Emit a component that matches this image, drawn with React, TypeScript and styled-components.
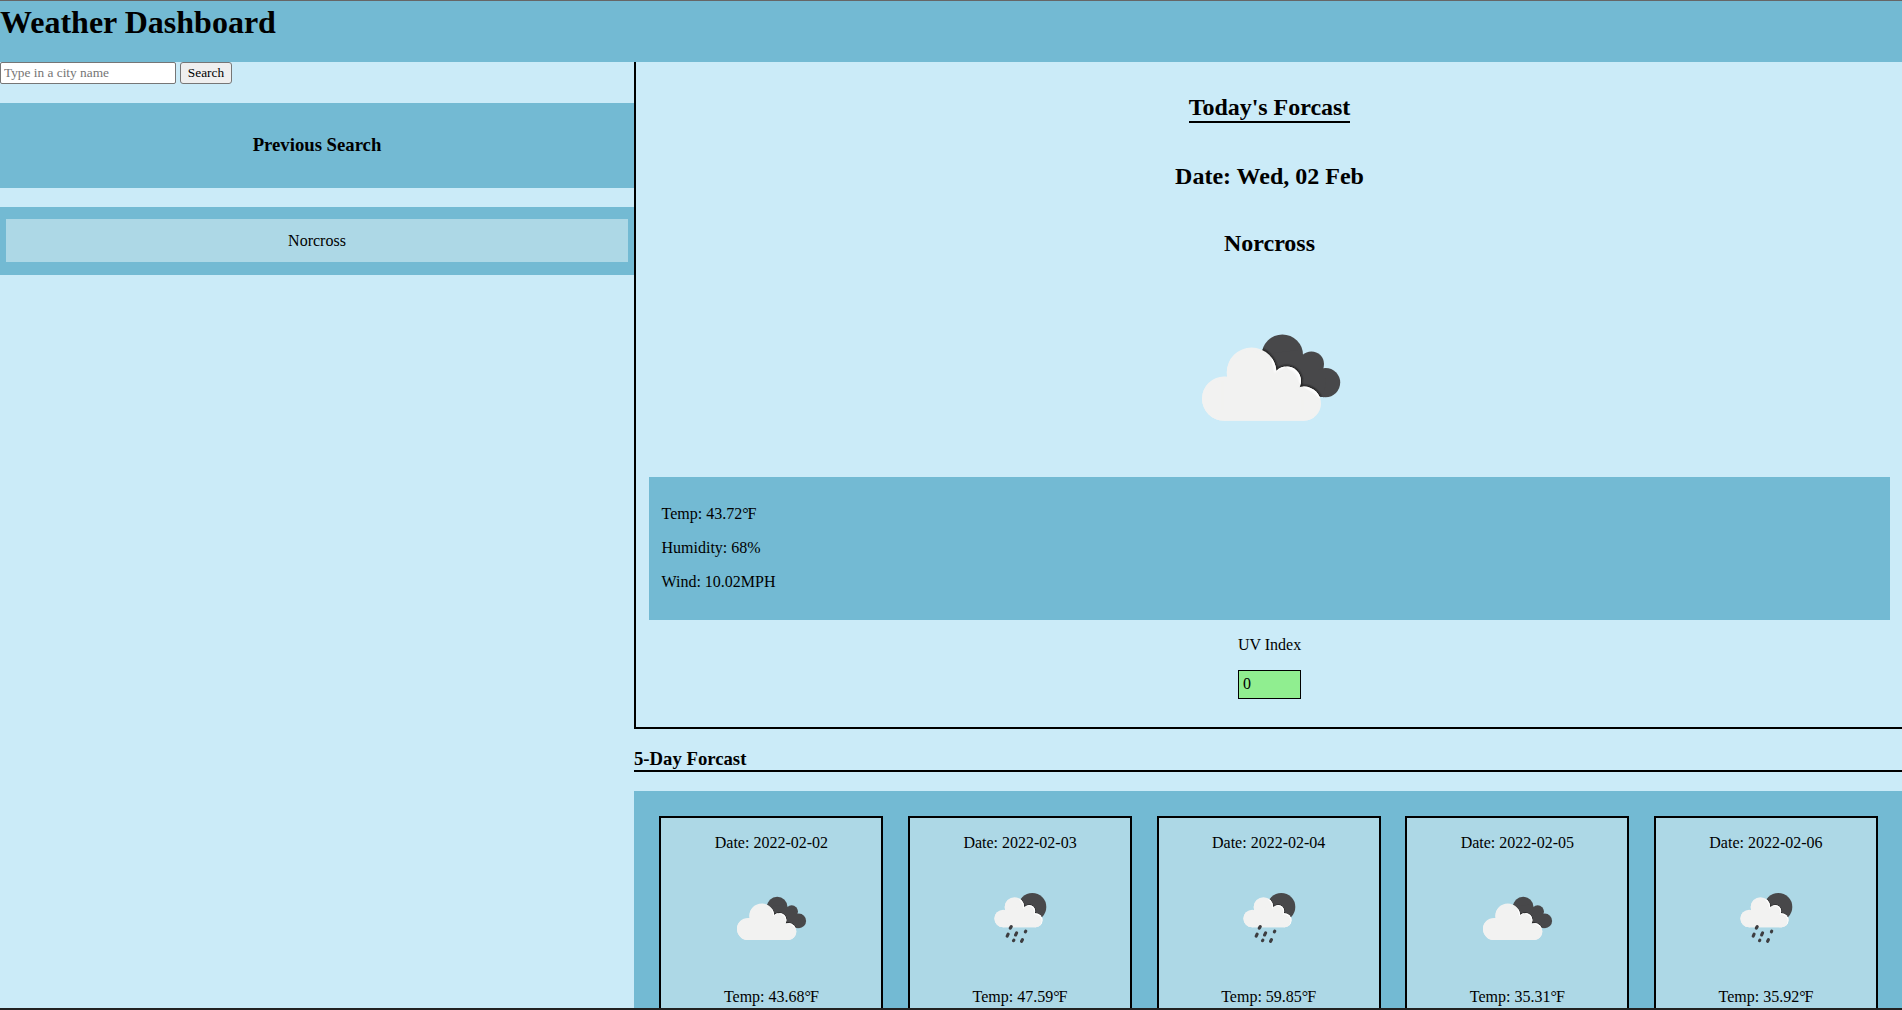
import React from "react";
import styled, { createGlobalStyle } from "styled-components";

const GlobalStyle = createGlobalStyle`
  * { box-sizing: border-box; }
  body {
    margin: 0;
    background: #cbebf8;
    font-family: "Liberation Serif", "Times New Roman", serif;
    font-size: 16px;
    line-height: 18px;
    color: #000;
  }
  h1, h2, h3, p { margin: 0; }
`;

const Page = styled.div`
  height: 1010px;
  overflow: hidden;
  display: flex;
  flex-direction: column;
  border-top: 1px solid #666;
  border-bottom: 2px solid #222;
`;

const Header = styled.header`
  flex: none;
  height: 61px;
  background: #73bad3;
`;

const Title = styled.h1`
  font-size: 32px;
  line-height: 37px;
  padding-top: 3px;
`;

const Main = styled.main`
  flex: 1;
  min-height: 0;
  display: flex;
`;

const Sidebar = styled.aside`
  width: 634px;
  flex: none;
`;

const SearchForm = styled.form`
  display: flex;
  gap: 4px;
  height: 41px;
  align-items: flex-start;
`;

const CityInput = styled.input`
  width: 176px;
  height: 22px;
  padding: 1px 3px 1px 3px;
  border: 1px solid #767676;
  border-radius: 2px;
  background: #fff;
  font-family: inherit;
  font-size: 13.333px;
  &::placeholder { color: #757575; }
`;

const SearchButton = styled.button`
  width: 52px;
  height: 22px;
  padding: 0;
  border: 1px solid #767676;
  border-radius: 3px;
  background: #efefef;
  font-family: inherit;
  font-size: 13.333px;
  color: #000;
`;

const SearchHeading = styled.h3`
  height: 85px;
  line-height: 84px;
  font-size: 18.72px;
  text-align: center;
  background: #73bad3;
`;

const History = styled.div`
  margin-top: 19px;
  height: 68px;
  padding: 12px 6px 13px;
  background: #73bad3;
`;

const HistoryItem = styled.div`
  height: 43px;
  line-height: 44px;
  text-align: center;
  background: #add8e6;
`;

const Content = styled.section`
  flex: 1;
  min-width: 0;
  display: flex;
  flex-direction: column;
`;

const Today = styled.div`
  flex: none;
  height: 667px;
  padding: 32px 12px 0 13px;
  border-left: 2px solid #000;
  border-bottom: 2px solid #000;
  display: flex;
  flex-direction: column;
  align-items: center;
`;

const TodayHeading = styled.h2<{ $underlined?: boolean; $gap: number }>`
  font-size: 24px;
  line-height: 27px;
  margin-bottom: ${(p) => p.$gap}px;
  letter-spacing: ${(p) => (p.$underlined ? "-0.04px" : "normal")};
  border-bottom: ${(p) => (p.$underlined ? "2px solid #000" : "none")};
`;

const Stats = styled.div`
  align-self: stretch;
  height: 143px;
  padding: 28px 12.5px 0;
  display: flex;
  flex-direction: column;
  gap: 16px;
  background: #73bad3;
`;

const Degree = styled.span`
  letter-spacing: -1px;
`;

const UvIndex = styled.div`
  margin-top: 16px;
  display: flex;
  flex-direction: column;
  gap: 16px;
`;

const UvValue = styled.div`
  height: 29px;
  padding: 4px;
  border: 1px solid #000;
  background: #90ee90;
`;

const ForecastHeading = styled.h3`
  flex: none;
  margin: 19px 0;
  height: 24px;
  font-size: 18.72px;
  line-height: 22px;
  border-bottom: 2px solid #000;
`;

const Forecast = styled.div`
  flex: none;
  height: 400px;
  padding: 25px 24px 25px 25.4px;
  display: flex;
  justify-content: space-between;
  background: #73bad3;
`;

const Card = styled.article`
  width: 224px;
  padding-top: 16px;
  border: 2px solid #000;
  display: flex;
  flex-direction: column;
  align-items: center;
  gap: 16px;
  background: #add8e6;
`;

const Icon = styled.svg<{ $size: number; $gap: number }>`
  display: block;
  flex: none;
  width: ${(p) => p.$size}px;
  height: ${(p) => p.$size}px;
  margin-bottom: ${(p) => p.$gap}px;
`;

const CloudsShape = () => (
  <>
    <circle cx="27" cy="60.3" r="11" />
    <circle cx="40.8" cy="47.2" r="12.4" />
    <circle cx="58.3" cy="51.5" r="7.2" />
    <circle cx="67" cy="62.8" r="8.5" />
    <path d="M27 50 L40 47 L58 50 L67 60 L67 71.3 L27 71.3Z" />
  </>
);

const DarkCloud = () => (
  <>
    <circle cx="56.2" cy="38.5" r="10.3" />
    <circle cx="70.7" cy="43" r="6.3" />
    <circle cx="77.8" cy="52.3" r="7.3" />
    <path d="M48 38 L64 36 L70 42 L78 50 L77 59.6 L73 59 L56 50Z" />
  </>
);

const RainCloudShape = () => (
  <>
    <circle cx="33.2" cy="50.5" r="8.8" />
    <circle cx="44.5" cy="39" r="9.8" />
    <circle cx="59.2" cy="43" r="6" />
    <circle cx="65.5" cy="52.3" r="7" />
    <path d="M33 44 L44 38 L59 42 L66 50 L66 59.3 L33 59.3Z" />
  </>
);

const Moon = () => <circle cx="62.3" cy="39" r="14" />;

type IconProps = { kind: string; size: number; gap: number; id: string };

function WeatherIcon({ kind, size, gap, id }: IconProps) {
  const cloudy = kind === "clouds";
  const Front = cloudy ? CloudsShape : RainCloudShape;
  const Back = cloudy ? DarkCloud : Moon;
  const top = cloudy && size === 100 ? -0.6 : 0;
  return (
    <Icon $size={size} $gap={gap} viewBox={`0 ${top} 100 100`}>
      <defs>
        <clipPath id={`back-${id}`}><Back /></clipPath>
        <clipPath id={`front-${id}`}><Front /></clipPath>
        <filter id={`soft-${id}`}><feGaussianBlur stdDeviation="0.6" /></filter>
      </defs>
      <g fill="#48484a"><Back /></g>
      <g clipPath={`url(#back-${id})`}>
        <g fill="#151515" stroke="#151515" strokeWidth="1" filter={`url(#soft-${id})`}><Front /></g>
      </g>
      <g fill="#f2f2f1"><Front /></g>
      <g clipPath={`url(#front-${id})`}>
        <path d="M49 28H90V61H76L66 54L58 44L52 50Z" fill="#fff" />
        <g fill="#f2f2f1" transform="translate(-0.9 1)" filter={`url(#soft-${id})`}><Front /></g>
        <path d="M20 66H72V74H20Z" fill="#f2f2f1" />
      </g>
      {!cloudy && (
        <path
          d="M41.2 58.6L40.3 60.1M38.1 66.2L37.2 68.2M46.6 64.9L45.6 67M55.7 63.2L55.4 63.8M43.8 72.2L43.5 72.7M52.4 71.7L51.6 73.3"
          stroke="#3d3d40"
          strokeWidth="3.1"
          strokeLinecap="round"
          fill="none"
        />
      )}
    </Icon>
  );
}

const Temperature = ({ value }: { value: string }) => (
  <p>Temp: {value}<Degree>°</Degree>F</p>
);

const days = [
  { date: "2022-02-02", kind: "clouds", temp: "43.68" },
  { date: "2022-02-03", kind: "rain", temp: "47.59" },
  { date: "2022-02-04", kind: "rain", temp: "59.85" },
  { date: "2022-02-05", kind: "clouds", temp: "35.31" },
  { date: "2022-02-06", kind: "rain", temp: "35.92" },
];

export default function App() {
  return (
    <Page>
      <GlobalStyle />
      <Header>
        <Title>Weather Dashboard</Title>
      </Header>
      <Main>
        <Sidebar>
          <SearchForm>
            <CityInput placeholder="Type in a city name" />
            <SearchButton type="button">Search</SearchButton>
          </SearchForm>
          <SearchHeading>Previous Search</SearchHeading>
          <History>
            <HistoryItem>Norcross</HistoryItem>
          </History>
        </Sidebar>
        <Content>
          <Today>
            <TodayHeading $underlined $gap={40}>Today's Forcast</TodayHeading>
            <TodayHeading $gap={40}>Date: Wed, 02 Feb</TodayHeading>
            <TodayHeading $gap={21}>Norcross</TodayHeading>
            <WeatherIcon kind="clouds" size={200} gap={-1} id="today" />
            <Stats>
              <Temperature value="43.72" />
              <p>Humidity: 68%</p>
              <p>Wind: 10.02MPH</p>
            </Stats>
            <UvIndex>
              <p>UV Index</p>
              <UvValue>0</UvValue>
            </UvIndex>
          </Today>
          <ForecastHeading>5-Day Forcast</ForecastHeading>
          <Forecast>
            {days.map((day) => (
              <Card key={day.date}>
                <p>Date: {day.date}</p>
                <WeatherIcon kind={day.kind} size={100} gap={4} id={day.date} />
                <Temperature value={day.temp} />
              </Card>
            ))}
          </Forecast>
        </Content>
      </Main>
    </Page>
  );
}
